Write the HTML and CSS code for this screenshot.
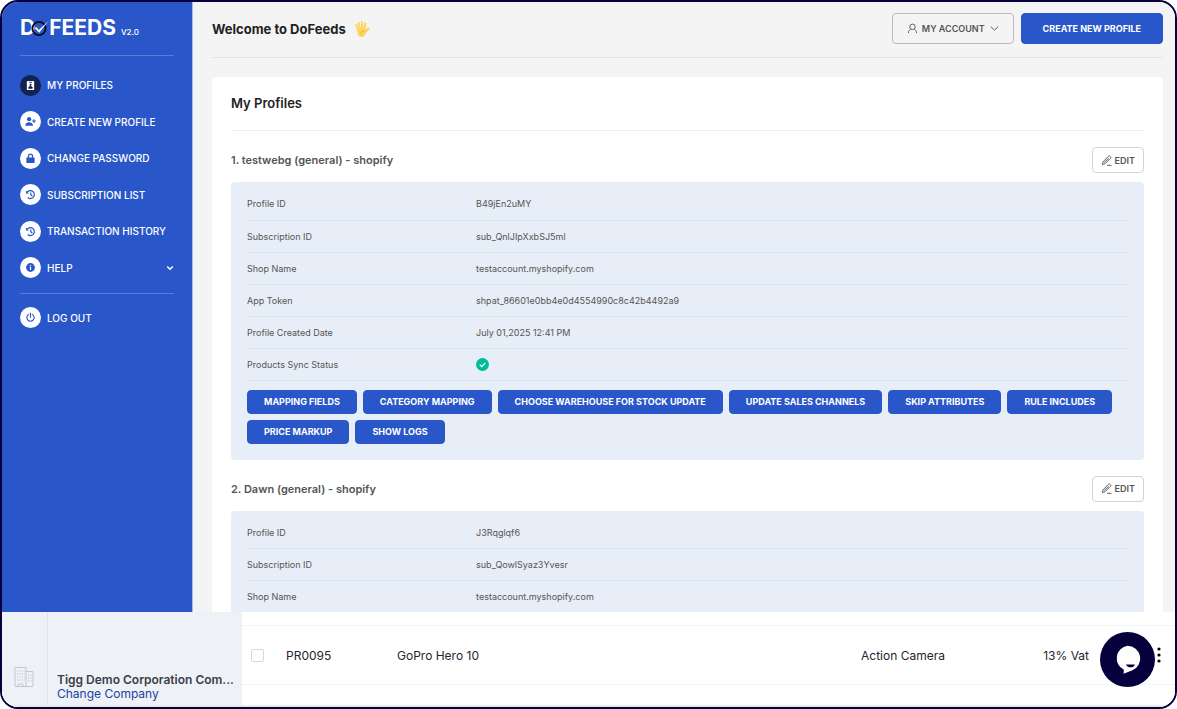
FILE: index.html
```html
<!DOCTYPE html>
<html lang="en">
<head>
  <meta charset="UTF-8">
  <meta name="viewport" content="width=device-width, initial-scale=1">
  <title>DoFeeds - My Profiles</title>
  <link rel="stylesheet" href="styles.css">
</head>
<body>
  <div class="window">
    <div class="app">
      <aside class="sidebar">
        <a href="#" class="logo">
          <span class="logo-text">D</span>
          <svg class="logo-mark" viewBox="0 0 18 18">
            <circle cx="8" cy="9.500" r="6.600" fill="none" stroke="#0b0b12" stroke-width="1.900"/>
            <path d="M3.500 9L5.800 8.200l2 2.800L17.500 2 8.200 13.800z" fill="#fff"/>
          </svg>
          <span class="logo-text">FEEDS</span>
          <span class="version">V2.0</span>
        </a>
        <nav>
          <ul class="menu">
            <li><a href="#" class="active">
              <span class="dot"><svg viewBox="0 0 12 12"><rect x="2" y="1" width="8" height="10" rx="1" fill="#fff"/><path d="M4.500 2.500h3M4 9c0-3 4-3 4 0z" stroke="#13234f" fill="#13234f"/><circle cx="6" cy="5.200" r="1.200" fill="#13234f"/></svg></span>
              My Profiles</a></li>
            <li><a href="#">
              <span class="dot"><svg viewBox="0 0 12 12"><circle cx="4.500" cy="3.500" r="2.300" fill="#2956c8"/><path d="M.300 10.500c0-5 8.400-5 8.400 0z" fill="#2956c8"/><path d="M9.800 3.500v4M7.800 5.500h4" stroke="#2956c8" stroke-width="1.200"/></svg></span>
              Create New Profile</a></li>
            <li><a href="#">
              <span class="dot"><svg viewBox="0 0 12 12"><rect x="1.500" y="4.800" width="9" height="6.200" rx="1" fill="#2956c8"/><path d="M3.800 5.500V3.500a2.200 2.200 0 0 1 4.400 0v2" fill="none" stroke="#2956c8" stroke-width="1.400"/></svg></span>
              Change Password</a></li>
            <li><a href="#">
              <span class="dot"><svg viewBox="0 0 12 12"><path d="M2.500 3.500A4.300 4.300 0 1 1 3 9.300M6.300 3.700v2.600l1.700 1.400" fill="none" stroke="#2956c8" stroke-width="1.300"/><path d="M1 1.500v3.300h3.300z" fill="#2956c8"/></svg></span>
              Subscription List</a></li>
            <li><a href="#">
              <span class="dot"><svg viewBox="0 0 12 12"><path d="M2.500 3.500A4.300 4.300 0 1 1 3 9.300M6.300 3.700v2.600l1.700 1.400" fill="none" stroke="#2956c8" stroke-width="1.300"/><path d="M1 1.500v3.300h3.300z" fill="#2956c8"/></svg></span>
              Transaction History</a></li>
            <li><a href="#">
              <span class="dot"><svg viewBox="0 0 12 12"><circle cx="6" cy="6" r="4.800" fill="#2956c8"/><path d="M6 5.500v3.200M6 3.200v1.300" stroke="#fff" stroke-width="1.300"/></svg></span>
              Help
              <svg class="caret" viewBox="0 0 8 8"><path d="M1.200 2.500L4 5.300l2.800-2.800" fill="none" stroke="#fff" stroke-width="1.500"/></svg></a></li>
          </ul>
          <ul class="menu menu-bottom">
            <li><a href="#">
              <span class="dot"><svg viewBox="0 0 12 12"><path d="M4 2.600a4 4 0 1 0 4 0M6 1.200v4.600" fill="none" stroke="#2956c8" stroke-width="1.200" stroke-linecap="round"/></svg></span>
              Log Out</a></li>
          </ul>
        </nav>
      </aside>

      <main class="content">
        <header class="topbar">
          <h1>Welcome to DoFeeds
            <svg class="hand" viewBox="0 0 16 18">
              <g fill="none" stroke="#ffd45c" stroke-width="2.100" stroke-linecap="round">
                <path d="M4 10L2.200 5M6 9L4.800 3M8.300 9L8 2M10.500 9.500l.800-6.300M11 12.500l3.400-4"/>
              </g>
              <path d="M3 9l8.500-.500.800 3c-.500 3-2.300 5.500-5 5.500C4 17 3 13 3 9z" fill="#ffd45c"/>
              <path d="M7 14c.200-2 1.500-3 3.300-3.200" fill="none" stroke="#e89a3c" stroke-width=".800"/>
            </svg>
          </h1>
          <div class="actions">
            <button class="btn-account">
              <svg viewBox="0 0 12 12"><circle cx="6" cy="4.200" r="3" /><path d="M1.500 11c0-2.300 1.400-3.700 2.600-4.300M10.500 11c0-2.300-1.400-3.700-2.600-4.300"/></svg>
              My Account
              <svg viewBox="0 0 12 12"><path d="M2 4l4 3.800L10 4"/></svg>
            </button>
            <button class="btn-create">Create New Profile</button>
          </div>
        </header>

        <section class="card">
          <h2>My Profiles</h2>

          <div class="profile-head">
            <h3>1. testwebg (general) - shopify</h3>
            <button class="btn-edit"><svg viewBox="0 0 12 12"><path d="M1.500 10.500l.600-3L8.300 1.300a1 1 0 0 1 1.500 0l.600.600a1 1 0 0 1 0 1.500L4.200 9.700zM3.300 8.500l5-5M6.500 11.300h5"/></svg>Edit</button>
          </div>
          <div class="panel">
            <table class="details">
              <tr><th>Profile ID</th><td>B49jEn2uMY</td></tr>
              <tr><th>Subscription ID</th><td>sub_QnlJIpXxbSJ5ml</td></tr>
              <tr><th>Shop Name</th><td>testaccount.myshopify.com</td></tr>
              <tr><th>App Token</th><td>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</td></tr>
              <tr><th>Profile Created Date</th><td>July 01,2025 12:41 PM</td></tr>
              <tr><th>Products Sync Status</th><td><svg class="ok" viewBox="0 0 13 13"><circle cx="6.500" cy="6.500" r="6.500" fill="#00bd9a"/><path d="M3.700 6.700l2 2 3.700-3.900" fill="none" stroke="#fff" stroke-width="1.200"/></svg></td></tr>
            </table>
            <div class="buttons">
              <button>Mapping Fields</button>
              <button>Category Mapping</button>
              <button>Choose Warehouse For Stock Update</button>
              <button>Update Sales Channels</button>
              <button>Skip Attributes</button>
              <button>Rule Includes</button>
              <button>Price Markup</button>
              <button>Show Logs</button>
            </div>
          </div>

          <div class="profile-head">
            <h3>2. Dawn (general) - shopify</h3>
            <button class="btn-edit"><svg viewBox="0 0 12 12"><path d="M1.500 10.500l.600-3L8.300 1.300a1 1 0 0 1 1.500 0l.600.600a1 1 0 0 1 0 1.500L4.200 9.700zM3.300 8.500l5-5M6.500 11.300h5"/></svg>Edit</button>
          </div>
          <div class="panel">
            <table class="details">
              <tr><th>Profile ID</th><td>J3Rqglqf6</td></tr>
              <tr><th>Subscription ID</th><td>sub_QowlSyaz3Yvesr</td></tr>
              <tr><th>Shop Name</th><td>testaccount.myshopify.com</td></tr>
            </table>
          </div>
        </section>
      </main>
    </div>

    <footer class="bottom">
      <div class="rail">
        <svg viewBox="0 0 20 20">
          <path d="M1 19.500V.500h11v19zM12 4.500h7v15h-7M4 19.500v-2.500h5v2.500" fill="none" stroke="#c3c8d0"/>
          <path d="M3 4h8M3 7h8M3 10h8M3 13h8M14 8h4M14 11h4M14 14h4" stroke="#c3c8d0" stroke-width="1.200" stroke-dasharray="1.200 1.200"/>
        </svg>
      </div>
      <div class="company">
        <strong>Tigg Demo Corporation Com...</strong>
        <a href="#">Change Company</a>
      </div>
      <div class="products">
        <table>
          <tr>
            <td class="col-check"><input type="checkbox" aria-label="Select PR0095"></td>
            <td class="col-code">PR0095</td>
            <td>GoPro Hero 10</td>
            <td class="col-category">Action Camera</td>
            <td class="col-tax">13% Vat</td>
            <td class="col-more"><button aria-label="More"><svg viewBox="0 0 4 16"><circle cx="2" cy="2" r="1.600"/><circle cx="2" cy="8" r="1.600"/><circle cx="2" cy="14" r="1.600"/></svg></button></td>
          </tr>
        </table>
      </div>
      <button class="chat" aria-label="Open chat">
        <svg viewBox="0 0 56 56">
          <path d="M28 14a13 13 0 0 1 5 25c-3 1.300-6 2.300-9 3.500l.300-4A13 13 0 0 1 28 14z" fill="#fff"/>
          <path d="M26.500 33h9c-1 4-7.500 4-9 0z" fill="#06003d"/>
        </svg>
      </button>
    </footer>
  </div>
</body>
</html>
```

FILE: styles.css
```css
* { box-sizing: border-box; }
body {
  margin: 0;
  font-family: Inter, sans-serif;
  background: #fff;
  color: #555;
}
button {
  font-family: inherit;
  cursor: pointer;
}
h1, h2, h3, ul {
  margin: 0;
  padding: 0;
}
.window {
  position: relative;
  display: flex;
  flex-direction: column;
  height: 100vh;
  border: 2px solid #06003d;
  border-radius: 18px;
  overflow: hidden;
}
.app {
  display: flex;
  flex: 1;
  min-height: 0;
  overflow: hidden;
}

/* sidebar */
.sidebar {
  width: 191px;
  flex-shrink: 0;
  padding: 0 18px;
  background: #2956c8;
  border-right: 1px solid #a9bbe8;
}
.logo {
  display: flex;
  align-items: center;
  height: 54px;
  padding-bottom: 2px;
  border-bottom: 1px solid #5b7dd6;
  color: #fff;
  text-decoration: none;
}
.logo-text {
  font-size: 21px;
  font-weight: 700;
}
.logo-mark {
  width: 18px;
  height: 18px;
  margin-left: -4px;
}
.version {
  margin: 8px 0 0 5px;
  font-size: 8px;
  font-weight: 500;
}
.menu {
  display: grid;
  grid-auto-rows: 1fr;
  min-height: 219px;
  margin: 11px 0 7px;
  list-style: none;
}
.menu a {
  display: flex;
  align-items: center;
  gap: 6px;
  height: 100%;
  color: #fff;
  font-size: 10px;
  font-weight: 500;
  text-transform: uppercase;
  text-decoration: none;
  white-space: nowrap;
}
.menu-bottom {
  min-height: 0;
  margin: 0;
  padding: 13px 0;
  border-top: 1px solid #5b7dd6;
}
.dot {
  display: flex;
  align-items: center;
  justify-content: center;
  width: 21px;
  height: 21px;
  border-radius: 50%;
  background: #fff;
}
.active .dot {
  background: #13234f;
}
.dot svg {
  width: 11px;
  height: 11px;
}
.caret {
  width: 8px;
  height: 8px;
  margin-left: auto;
}

/* main column */
.content {
  flex: 1;
  min-width: 0;
  padding: 0 12px 0 19px;
  background: #f4f4f4;
}
.topbar {
  display: flex;
  align-items: center;
  justify-content: space-between;
  height: 56px;
  margin-bottom: 19px;
  padding-bottom: 2px;
  border-bottom: 1px solid #e5e5e5;
}
h1 {
  display: flex;
  align-items: center;
  gap: 8px;
  color: #222;
  font-size: 13px;
  font-weight: 700;
}
.hand {
  width: 16px;
  height: 18px;
}
.actions {
  display: flex;
  gap: 7px;
}
.actions button {
  height: 31px;
  border-radius: 4px;
  font-size: 9px;
  font-weight: 600;
  text-transform: uppercase;
}
.btn-account {
  display: flex;
  align-items: center;
  gap: 4px;
  padding: 0 13px 0 14px;
  border: 1px solid #bbb;
  background: none;
  color: #555;
}
.btn-account svg {
  width: 11px;
  height: 11px;
}
.btn-account svg, .btn-edit svg {
  fill: none;
  stroke: #555;
}
.actions .btn-create {
  padding: 0 21px;
  border: 1px solid #2956c8;
  background: #2956c8;
  color: #fff;
  font-weight: 700;
}
.card {
  padding: 0 19px 19px;
  border-radius: 4px;
  background: #fff;
}
h2 {
  padding: 16px 0;
  border-bottom: 1px solid #eee;
  color: #222;
  font-size: 13px;
  font-weight: 600;
  line-height: 21px;
}
.profile-head {
  display: flex;
  align-items: center;
  justify-content: space-between;
  margin: 16px 0 9px;
}
h3 {
  font-size: 11px;
  font-weight: 600;
}
.btn-edit {
  display: flex;
  align-items: center;
  gap: 3px;
  height: 26px;
  padding: 0 8px;
  border: 1px solid #d3d3d3;
  border-radius: 4px;
  background: #fff;
  color: #555;
  font-size: 9px;
  font-weight: 600;
  text-transform: uppercase;
}
.btn-edit svg {
  width: 11px;
  height: 11px;
}
.panel {
  padding: 6px 16px 16px;
  border-radius: 4px;
  background: #e7eef8;
}
.details {
  width: 100%;
  border-collapse: collapse;
  table-layout: fixed;
  font-size: 9px;
}
.details th, .details td {
  height: 32px;
  padding: 0;
  border-bottom: 1px solid #d0e8f0;
  text-align: left;
  font-weight: 400;
}
.details th {
  width: 26%;
}
.ok {
  display: block;
  width: 13px;
  height: 13px;
}
.buttons {
  display: flex;
  flex-wrap: wrap;
  gap: 6px;
  margin-top: 9px;
}
.buttons button {
  height: 24px;
  padding: 0 16px;
  border: 1px solid #2956c8;
  border-radius: 4px;
  background: #2956c8;
  color: #fff;
  font-size: 9px;
  font-weight: 700;
  text-transform: uppercase;
}

/* bottom strip */
.bottom {
  display: flex;
  height: 95px;
  flex-shrink: 0;
  background: #fff;
  border-bottom: 2px solid #e9eaec;
}
.rail {
  width: 46px;
  padding: 55px 12px 0;
  background: #eef1f6;
  border-right: 1px solid #dfe3e9;
}
.rail svg {
  display: block;
  width: 20px;
  height: 20px;
}
.company {
  display: flex;
  flex-direction: column;
  justify-content: flex-end;
  width: 194px;
  padding: 0 0 4px 9px;
  background: #eef1f6;
  font-size: 12px;
  line-height: 14px;
  white-space: nowrap;
}
.company strong {
  color: #39404a;
  font-weight: 600;
}
.company a {
  color: #1b44a0;
  text-decoration: none;
}
.products {
  flex: 1;
  padding-top: 13px;
}
.products table {
  width: 100%;
  border-collapse: collapse;
  color: #22262e;
  font-size: 12px;
}
.products td {
  height: 59px;
  padding: 0;
  border: 1px solid #f3f4f5;
  border-width: 1px 0;
}
.products .col-check {
  width: 44px;
  padding-left: 9px;
}
.col-check input {
  display: block;
  appearance: none;
  width: 13px;
  height: 13px;
  margin: 0;
  border: 1px solid #d5d7da;
  border-radius: 2px;
  background: #fff;
}
.col-code { width: 111px; }
.col-category { width: 148px; }
.col-tax {
  width: 80px;
  text-align: right;
}
.products .col-more {
  width: 86px;
  padding-right: 14px;
}
.col-more button {
  display: block;
  margin-left: auto;
  padding: 0;
  border: 0;
  background: none;
}
.col-more svg {
  display: block;
  width: 4px;
  height: 16px;
}
.chat {
  position: absolute;
  right: 20px;
  bottom: 20px;
  width: 55px;
  height: 55px;
  padding: 0;
  border: 0;
  border-radius: 50%;
  background: #06003d;
}
.chat svg {
  display: block;
}
```
